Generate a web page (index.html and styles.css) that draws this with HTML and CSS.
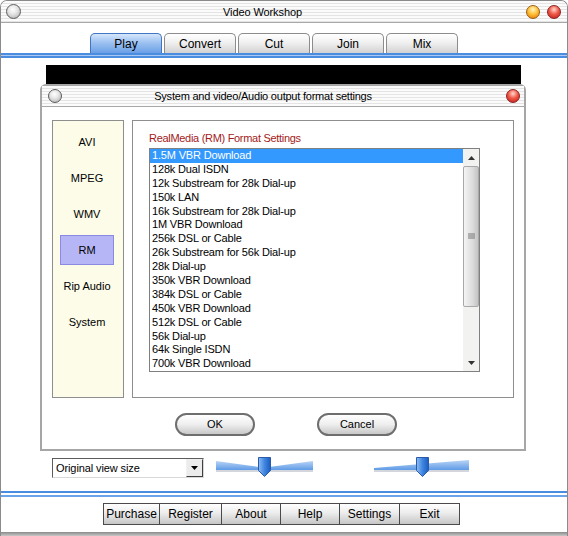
FILE: index.html
```html
<!DOCTYPE html>
<html lang="en">
<head>
    <meta charset="UTF-8">
    <title>Video Workshop</title>
    <link rel="stylesheet" href="styles.css">
</head>
<body>
    <div class="window">
        <div class="titlebar">
            <span class="orb orb-gray"></span>
            <div class="title">Video Workshop</div>
            <span class="orb orb-orange"></span>
            <span class="orb orb-red"></span>
        </div>

        <div class="tabs">
            <div class="tab active">Play</div>
            <div class="tab">Convert</div>
            <div class="tab">Cut</div>
            <div class="tab">Join</div>
            <div class="tab">Mix</div>
        </div>
        <div class="blueline"></div>

        <div class="screen"></div>

        <div class="dialog">
            <div class="dlg-titlebar">
                <span class="orb orb-gray small"></span>
                <div class="dlg-title">System and video/Audio output format settings</div>
                <span class="orb orb-red small"></span>
            </div>
            <div class="dlg-body">
                <div class="formats">
                    <div class="fmt">AVI</div>
                    <div class="fmt">MPEG</div>
                    <div class="fmt">WMV</div>
                    <div class="fmt selected">RM</div>
                    <div class="fmt">Rip Audio</div>
                    <div class="fmt">System</div>
                </div>
                <div class="settings">
                    <div class="heading">RealMedia (RM) Format Settings</div>
                    <div class="listbox">
                        <div class="items">
                            <div class="item sel">1.5M VBR Download</div>
                            <div class="item">128k Dual ISDN</div>
                            <div class="item">12k Substream for 28k Dial-up</div>
                            <div class="item">150k LAN</div>
                            <div class="item">16k Substream for 28k Dial-up</div>
                            <div class="item">1M VBR Download</div>
                            <div class="item">256k DSL or Cable</div>
                            <div class="item">26k Substream for 56k Dial-up</div>
                            <div class="item">28k Dial-up</div>
                            <div class="item">350k VBR Download</div>
                            <div class="item">384k DSL or Cable</div>
                            <div class="item">450k VBR Download</div>
                            <div class="item">512k DSL or Cable</div>
                            <div class="item">56k Dial-up</div>
                            <div class="item">64k Single ISDN</div>
                            <div class="item">700k VBR Download</div>
                        </div>
                        <div class="scrollbar">
                            <div class="arrow">
                                <svg width="7" height="4" viewBox="0 0 7 4"><path d="M0 4 L3.5 0 L7 4 Z" fill="#333"/></svg>
                            </div>
                            <div class="thumb">
                                <svg width="7" height="7" viewBox="0 0 7 7"><path d="M0 1h7M0 3h7M0 5h7" stroke="#777" stroke-width="1"/></svg>
                            </div>
                            <div class="track"></div>
                            <div class="arrow">
                                <svg width="7" height="4" viewBox="0 0 7 4"><path d="M0 0 L3.5 4 L7 0 Z" fill="#333"/></svg>
                            </div>
                        </div>
                    </div>
                </div>
            </div>
            <div class="dlg-buttons">
                <div class="pill">OK</div>
                <div class="pill">Cancel</div>
            </div>
        </div>

        <div class="controls">
            <div class="select">
                <span class="select-text">Original view size</span>
                <span class="select-btn">
                    <svg width="7" height="4" viewBox="0 0 7 4"><path d="M0 0 L3.5 4 L7 0 Z" fill="#000"/></svg>
                </span>
            </div>
            <svg class="slider s1" width="99" height="21" viewBox="0 0 99 21">
                <defs>
                    <linearGradient id="wedge" x1="0" y1="0" x2="0" y2="1">
                        <stop offset="0" stop-color="#b9d4f6"/>
                        <stop offset="1" stop-color="#5f9be6"/>
                    </linearGradient>
                    <linearGradient id="knob" x1="0" y1="0" x2="1" y2="0">
                        <stop offset="0" stop-color="#8fbdf3"/>
                        <stop offset="0.5" stop-color="#3f86e0"/>
                        <stop offset="1" stop-color="#1d5cc0"/>
                    </linearGradient>
                </defs>
                <rect x="1" y="12" width="97" height="3" fill="#d3d7dd"/>
                <path d="M1 4 L44 10 L44 13 L1 13 Z" fill="url(#wedge)"/>
                <path d="M54 10 L98 4 L98 13 L54 13 Z" fill="url(#wedge)"/>
                <path d="M43.5 0.5 h12 v13 l-6 6 l-6 -6 Z" fill="url(#knob)" stroke="#2a5aa8"/>
            </svg>
            <svg class="slider s2" width="97" height="21" viewBox="0 0 97 21">
                <rect x="1" y="12" width="95" height="3" fill="#d3d7dd"/>
                <path d="M1 11 L96 3 L96 13 L1 13 Z" fill="url(#wedge)"/>
                <path d="M43.5 0.5 h12 v13 l-6 6 l-6 -6 Z" fill="url(#knob)" stroke="#2a5aa8"/>
            </svg>
        </div>

        <div class="blueline double"></div>

        <div class="toolbar">
            <div class="tbtn w57">Purchase</div>
            <div class="tbtn w62">Register</div>
            <div class="tbtn w59">About</div>
            <div class="tbtn w59">Help</div>
            <div class="tbtn w60">Settings</div>
            <div class="tbtn w60">Exit</div>
        </div>

        <div class="bottom-edge"></div>
    </div>
</body>
</html>
```

FILE: styles.css
```css
body {
    margin: 0;
    background: #fff;
    font-family: "Liberation Sans", Arial, sans-serif;
    font-size: 11px;
    color: #000;
}
.window {
    width: 568px;
    height: 536px;
    box-sizing: border-box;
    border: 1px solid #8a8a8a;
    border-bottom: none;
    border-radius: 7px 7px 0 0;
    background: #fff;
    overflow: hidden;
    display: flex;
    flex-direction: column;
}
.titlebar {
    height: 21px;
    display: flex;
    align-items: center;
    border-bottom: 1px solid #a8a8a8;
    background: repeating-linear-gradient(to bottom, #fbfbfb 0, #fbfbfb 2px, #e4e4e4 2px, #e4e4e4 3px);
}
.title {
    flex: 1;
    text-align: center;
    padding-right: 22px;
    font-size: 11px;
    letter-spacing: -0.1px;
}
.orb {
    width: 15px;
    height: 15px;
    border-radius: 50%;
    box-sizing: border-box;
    border: 1px solid #5c5c5c;
    flex: none;
}
.orb.small {
    width: 14px;
    height: 14px;
}
.titlebar .orb-gray {
    margin-left: 5px;
}
.titlebar .orb-orange {
    width: 14px;
    height: 14px;
    margin-right: 7px;
}
.titlebar .orb-red {
    width: 14px;
    height: 14px;
    margin-right: 6px;
}
.orb-gray {
    background: radial-gradient(circle at 45% 35%, #ffffff 0, #e6e6e6 40%, #a8a8a8 100%);
}
.orb-orange {
    border-color: #9a5c18;
    background: radial-gradient(circle at 50% 30%, #fff6c4 0, #ffc23a 45%, #e07000 100%);
}
.orb-red {
    border-color: #8a2020;
    background: radial-gradient(circle at 50% 30%, #ffd8d0 0, #f05a48 45%, #b81818 100%);
}

/* tabs */
.tabs {
    display: flex;
    gap: 2px;
    margin: 10px 0 0 89px;
    height: 20px;
}
.tab {
    width: 72px;
    box-sizing: border-box;
    border: 1px solid #8c8c8c;
    border-bottom: none;
    border-radius: 5px 5px 0 0;
    background: linear-gradient(to bottom, #ffffff, #f0f0f0 45%, #d2d2d2);
    text-align: center;
    line-height: 20px;
    font-size: 12px;
}
.tab.active {
    border-color: #3f76c4;
    background: linear-gradient(to bottom, #d6e6fb, #9dc2f1 45%, #6a9fe6);
}
.blueline {
    height: 5px;
    background: linear-gradient(to bottom, #4a8de0 0, #4a8de0 2px, #a9c9f2 2px, #a9c9f2 3px, #4a8de0 3px);
}
.blueline.double {
    height: 6px;
    margin-top: 13px;
    background: linear-gradient(to bottom, #4a8de0 0, #4a8de0 2px, #fff 2px, #fff 4px, #6aa3ea 4px);
}

.screen {
    margin: 7px 0 0 45px;
    width: 475px;
    height: 19px;
    background: #000;
}

/* dialog */
.dialog {
    margin-left: 39px;
    width: 486px;
    height: 367px;
    box-sizing: border-box;
    border: 2px solid #a6a6a6;
    border-radius: 6px 6px 0 0;
    background: #fff;
    display: flex;
    flex-direction: column;
}
.dlg-titlebar {
    height: 20px;
    display: flex;
    align-items: center;
    border-bottom: 1px solid #a8a8a8;
    background: repeating-linear-gradient(to bottom, #fbfbfb 0, #fbfbfb 2px, #e4e4e4 2px, #e4e4e4 3px);
}
.dlg-titlebar .orb-gray {
    margin-left: 6px;
}
.dlg-titlebar .orb-red {
    margin-right: 4px;
}
.dlg-title {
    flex: 1;
    text-align: center;
    padding-right: 42px;
    letter-spacing: -0.22px;
}
.dlg-body {
    display: flex;
    gap: 8px;
    padding: 13px 0 0 10px;
}
.formats {
    width: 72px;
    height: 278px;
    box-sizing: border-box;
    border: 1px solid #8e8e8e;
    background: #fcfce8;
    padding-top: 6px;
    display: flex;
    flex-direction: column;
    align-items: center;
    gap: 6px;
}
.fmt {
    width: 54px;
    height: 30px;
    box-sizing: border-box;
    line-height: 28px;
    text-align: center;
    border: 1px solid transparent;
    margin-left: -2px;
}
.fmt.selected {
    background: #b6b6f6;
    border-color: #8a8ae2;
}
.settings {
    width: 382px;
    height: 278px;
    box-sizing: border-box;
    border: 1px solid #8e8e8e;
    padding: 11px 0 0 16px;
}
.heading {
    color: #a31a1a;
    height: 13px;
    line-height: 13px;
    margin-bottom: 3px;
    letter-spacing: -0.3px;
}
.listbox {
    width: 331px;
    height: 224px;
    box-sizing: border-box;
    border: 1px solid #808080;
    display: flex;
    overflow: hidden;
}
.items {
    flex: 1;
    overflow: hidden;
}
.item {
    height: 13.9px;
    line-height: 13.9px;
    padding-left: 2px;
    white-space: nowrap;
    letter-spacing: -0.17px;
}
.item.sel {
    background: #3399ff;
    color: #fff;
}
.scrollbar {
    width: 16px;
    display: flex;
    flex-direction: column;
    background: #f2f2f0;
}
.arrow {
    height: 17px;
    display: flex;
    align-items: center;
    justify-content: center;
}
.thumb {
    height: 141px;
    box-sizing: border-box;
    border: 1px solid #a8a8a8;
    border-radius: 2px;
    background: linear-gradient(to right, #f4f4f4, #dcdcdc 60%, #c4c4c4);
    display: flex;
    align-items: center;
    justify-content: center;
}
.track {
    flex: 1;
}
.dlg-buttons {
    display: flex;
    gap: 62px;
    padding: 15px 0 0 133px;
}
.pill {
    width: 80px;
    height: 23px;
    box-sizing: border-box;
    border: 2px solid #6e6e6e;
    border-radius: 12px;
    background: linear-gradient(to bottom, #ffffff, #eeeeee 50%, #c8c8c8);
    text-align: center;
    line-height: 19px;
    font-size: 11px;
}

/* view controls */
.controls {
    display: flex;
    align-items: center;
    margin: 6px 0 0 51px;
    height: 21px;
}
.select {
    width: 152px;
    height: 20px;
    box-sizing: border-box;
    border: 1px solid;
    border-color: #5c5c5c #d8d8d8 #d8d8d8 #5c5c5c;
    display: flex;
    align-items: center;
}
.select-text {
    flex: 1;
    padding-left: 3px;
    letter-spacing: -0.1px;
}
.select-btn {
    width: 17px;
    height: 18px;
    box-sizing: border-box;
    border: 1px solid;
    border-color: #f0f0f0 #404040 #404040 #f0f0f0;
    background: #ececec;
    display: flex;
    align-items: center;
    justify-content: center;
}
.slider {
    display: block;
}
.s1 {
    margin-left: 11px;
}
.s2 {
    margin-left: 59px;
}

/* bottom toolbar */
.toolbar {
    display: flex;
    margin: 6px 0 0 102px;
    height: 22px;
}
.tbtn {
    height: 22px;
    box-sizing: border-box;
    border: 1px solid #4a4a4a;
    border-left: none;
    background: linear-gradient(to bottom, #ffffff, #ececec 45%, #c6c6c6);
    text-align: center;
    line-height: 20px;
    font-size: 12px;
}
.tbtn:first-child {
    border-left: 1px solid #4a4a4a;
}
.w57 { width: 57px; }
.w59 { width: 59px; }
.w60 { width: 60px; }
.w62 { width: 62px; }
.bottom-edge {
    margin-top: auto;
    height: 4px;
    background: linear-gradient(to bottom, #8a8a8a, #c8c8c8);
}
```
